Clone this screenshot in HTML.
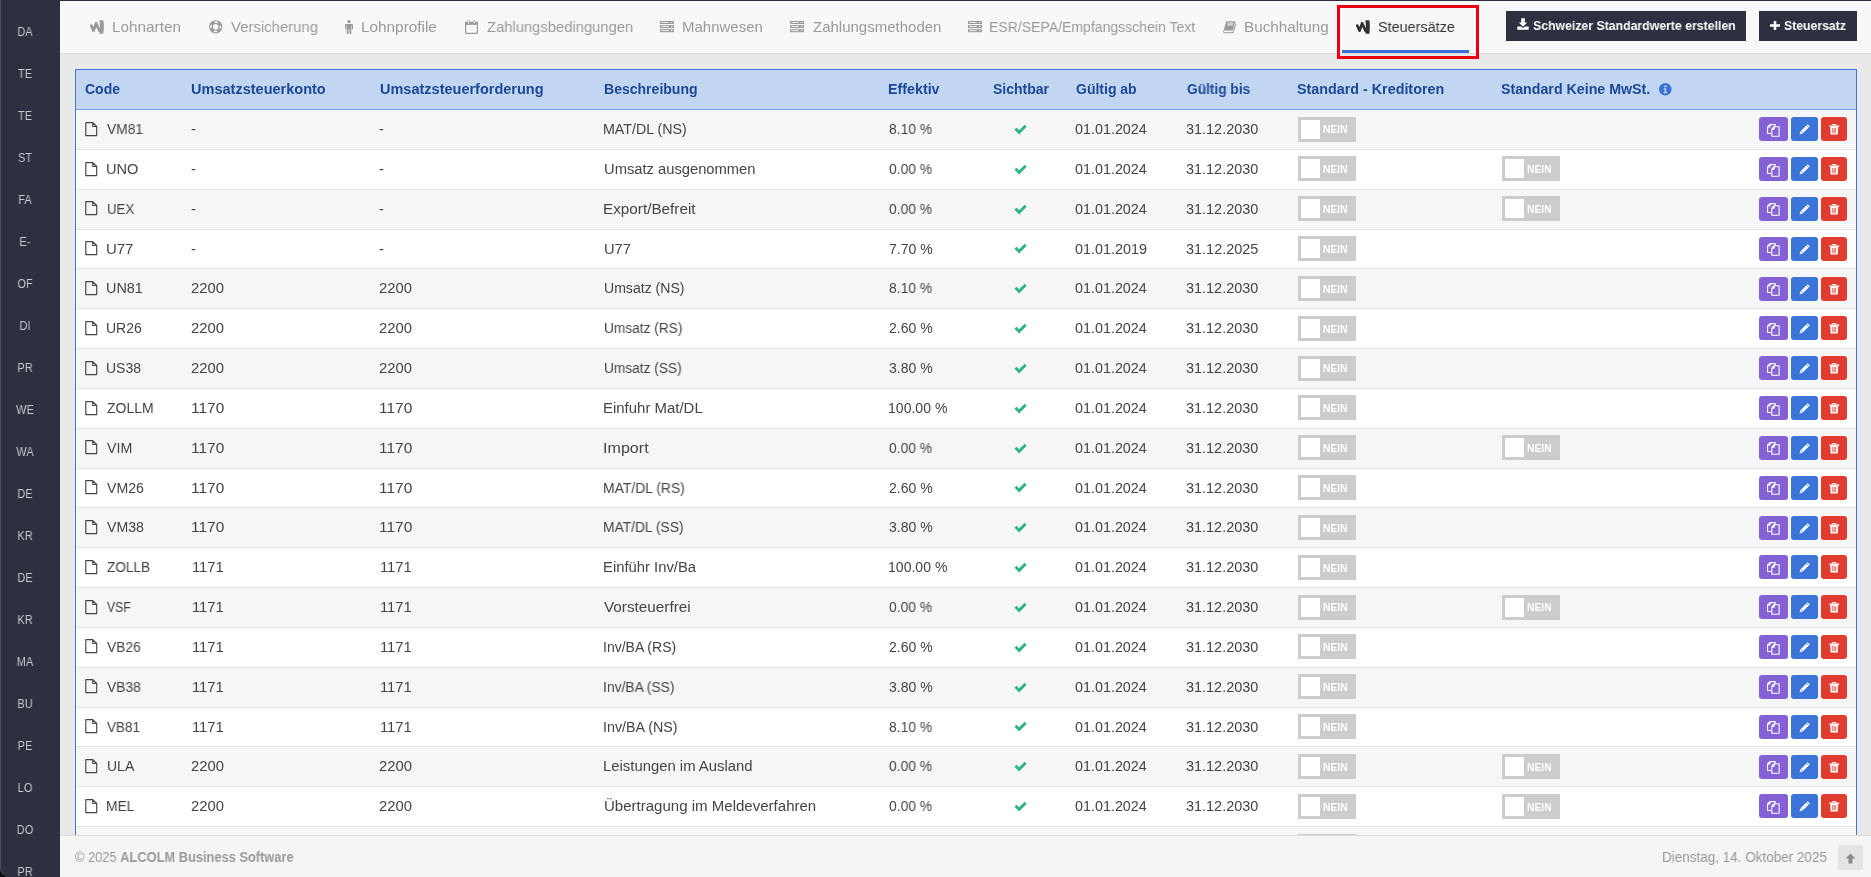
<!DOCTYPE html><html><head><meta charset="utf-8"><style>
html,body{margin:0;padding:0;width:1871px;height:877px;overflow:hidden;background:#e9e9e9;font-family:"Liberation Sans", sans-serif;}
.t{position:absolute;white-space:nowrap;line-height:1;transform-origin:0 0;will-change:transform;}
.a{position:absolute;}
svg{position:absolute;overflow:visible;}
</style></head><body>
<div class="a" style="left:60px;top:0;width:1811px;height:53px;background:#f8f8f8;"></div>
<div class="a" style="left:60px;top:53px;width:1811px;height:1px;background:#dcdcdc;"></div>
<div class="a" style="left:0;top:0;width:1871px;height:1px;background:#2c3040;"></div>
<div class="a" style="left:75px;top:69px;width:1782px;height:800px;background:#fff;box-sizing:border-box;border:1px solid #3b76d8;"></div>
<div class="a" style="left:76px;top:70px;width:1780px;height:39px;background:#c2d6f1;"></div>
<div class="a" style="left:76px;top:109px;width:1780px;height:1px;background:#6f9de3;"></div>
<div class="t" style="left:84.57px;top:82.05px;font-size:14px;color:#1b4896;font-weight:bold;transform:scaleX(0.9948);">Code</div>
<div class="t" style="left:191.17px;top:82.05px;font-size:14px;color:#1b4896;font-weight:bold;transform:scaleX(1.0371);">Umsatzsteuerkonto</div>
<div class="t" style="left:379.87px;top:82.05px;font-size:14px;color:#1b4896;font-weight:bold;transform:scaleX(1.0358);">Umsatzsteuerforderung</div>
<div class="t" style="left:603.55px;top:82.05px;font-size:14px;color:#1b4896;font-weight:bold;transform:scaleX(1.0023);">Beschreibung</div>
<div class="t" style="left:888.43px;top:82.05px;font-size:14px;color:#1b4896;font-weight:bold;transform:scaleX(1.0194);">Effektiv</div>
<div class="t" style="left:992.54px;top:82.05px;font-size:14px;color:#1b4896;font-weight:bold;">Sichtbar</div>
<div class="t" style="left:1075.97px;top:82.05px;font-size:14px;color:#1b4896;font-weight:bold;transform:scaleX(0.9965);">G&uuml;ltig ab</div>
<div class="t" style="left:1186.68px;top:82.05px;font-size:14px;color:#1b4896;font-weight:bold;transform:scaleX(0.9778);">G&uuml;ltig bis</div>
<div class="t" style="left:1297.23px;top:82.05px;font-size:14px;color:#1b4896;font-weight:bold;transform:scaleX(1.0226);">Standard - Kreditoren</div>
<div class="t" style="left:1501.23px;top:82.05px;font-size:14px;color:#1b4896;font-weight:bold;transform:scaleX(1.0149);">Standard Keine MwSt.</div>
<svg style="left:1658.5px;top:82.8px" width="12.5" height="12.5" viewBox="0 0 12 12"><circle cx="6" cy="6" r="6" fill="#3b73d6"/><circle cx="6.1" cy="3.2" r="1.1" fill="#c2d6f1"/><path d="M4.6 5.1h2.3v3.6h0.9v1.1H4.5V8.7h0.9V6.2h-0.8z" fill="#c2d6f1"/></svg>
<div class="a" style="left:76px;top:110.00px;width:1780px;height:39.00px;background:#f6f6f6;"></div>
<div class="a" style="left:76px;top:149.00px;width:1780px;height:1px;background:#e3e3e3;"></div>
<svg style="left:85px;top:121.70px" width="12" height="14" viewBox="0 0 12 14"><path d="M0.8 0.6h7l3.9 3.9v9.1h-10.9z M7.8 0.6v3.9h3.9" fill="none" stroke="#444" stroke-width="1.15" stroke-linejoin="round"/></svg>
<div class="t" style="left:107.08px;top:122.05px;font-size:14px;color:#444;font-weight:normal;transform:scaleX(0.9862);">VM81</div>
<div class="t" style="left:191.31px;top:122.05px;font-size:14px;color:#444;font-weight:normal;transform:scaleX(1.0483);">-</div>
<div class="t" style="left:379.31px;top:122.05px;font-size:14px;color:#444;font-weight:normal;transform:scaleX(1.0483);">-</div>
<div class="t" style="left:603.23px;top:122.05px;font-size:14px;color:#444;font-weight:normal;transform:scaleX(1.0170);">MAT/DL (NS)</div>
<div class="t" style="left:888.65px;top:122.05px;font-size:14px;color:#444;font-weight:normal;transform:scaleX(0.9875);">8.10 %</div>
<svg style="left:1014px;top:124.00px" width="13" height="10" viewBox="0 0 13 10"><path d="M1.5 4.8l3.6 3.6l6.6-6.6" fill="none" stroke="#30b38a" stroke-width="2.9"/></svg>
<div class="t" style="left:1075.29px;top:122.05px;font-size:14px;color:#444;font-weight:normal;transform:scaleX(1.0247);">01.01.2024</div>
<div class="t" style="left:1186.06px;top:122.05px;font-size:14px;color:#444;font-weight:normal;transform:scaleX(1.0318);">31.12.2030</div>
<div class="a" style="left:1298px;top:116.60px;width:58px;height:25px;background:#cccccc;"><div class="a" style="left:3px;top:3px;width:19px;height:19px;background:#fff;"></div><div class="t" style="left:24.6px;top:8.9px;font-size:10px;font-weight:bold;color:#fff;transform:scaleX(1.03)">NEIN</div></div>
<div class="a" style="left:1759px;top:117.30px;width:29px;height:24px;background:#8461d5;border-radius:3px;"></div>
<svg style="left:1767px;top:123.80px" width="13" height="13" viewBox="0 0 13 13"><path d="M8.2 2.7V0.6H3L0.6 3V9.5H4.8 M3 0.6V3H0.6 M7.2 2.7H12.1V12.3H4.8V5.1z M7.2 2.7V5.1H4.8" fill="none" stroke="#fff" stroke-width="1.1" stroke-linejoin="round"/></svg>
<div class="a" style="left:1791px;top:117.30px;width:27px;height:24px;background:#3c74d8;border-radius:3px;"></div>
<svg style="left:1798px;top:123.30px" width="13" height="13" viewBox="0 0 13 13"><path d="M9.6 1.2l2.2 2.2l-7.2 7.2l-3.1 0.9l0.9-3.1z" fill="#fff"/><path d="M2.9 8.3l1.8 1.8 M8.4 2.4l2.2 2.2" stroke="#3c74d8" stroke-width="0.7" fill="none"/></svg>
<div class="a" style="left:1821px;top:117.30px;width:26px;height:24px;background:#e03c2f;border-radius:3px;"></div>
<svg style="left:1829px;top:124.30px" width="11" height="11" viewBox="0 0 11 11"><path d="M0.3 2.1h10" stroke="#fff" stroke-width="1.3"/><path d="M3.4 1.6v-1h3.6v1" fill="none" stroke="#fff" stroke-width="1"/><path d="M1.2 2.6h8l-0.4 8h-7.2z" fill="#fff"/><path d="M3.7 4v5.2 M5.2 4v5.2 M6.7 4v5.2" stroke="#e03c2f" stroke-width="0.75"/></svg>
<div class="a" style="left:76px;top:150.00px;width:1780px;height:38.83px;background:#ffffff;"></div>
<div class="a" style="left:76px;top:188.83px;width:1780px;height:1px;background:#e3e3e3;"></div>
<svg style="left:85px;top:161.53px" width="12" height="14" viewBox="0 0 12 14"><path d="M0.8 0.6h7l3.9 3.9v9.1h-10.9z M7.8 0.6v3.9h3.9" fill="none" stroke="#444" stroke-width="1.15" stroke-linejoin="round"/></svg>
<div class="t" style="left:106.45px;top:161.88px;font-size:14px;color:#444;font-weight:normal;transform:scaleX(1.0410);">UNO</div>
<div class="t" style="left:191.31px;top:161.88px;font-size:14px;color:#444;font-weight:normal;transform:scaleX(1.0483);">-</div>
<div class="t" style="left:379.31px;top:161.88px;font-size:14px;color:#444;font-weight:normal;transform:scaleX(1.0483);">-</div>
<div class="t" style="left:603.54px;top:161.88px;font-size:14px;color:#444;font-weight:normal;transform:scaleX(1.0524);">Umsatz ausgenommen</div>
<div class="t" style="left:888.71px;top:161.88px;font-size:14px;color:#444;font-weight:normal;transform:scaleX(0.9861);">0.00 %</div>
<svg style="left:1014px;top:163.83px" width="13" height="10" viewBox="0 0 13 10"><path d="M1.5 4.8l3.6 3.6l6.6-6.6" fill="none" stroke="#30b38a" stroke-width="2.9"/></svg>
<div class="t" style="left:1075.29px;top:161.88px;font-size:14px;color:#444;font-weight:normal;transform:scaleX(1.0247);">01.01.2024</div>
<div class="t" style="left:1186.06px;top:161.88px;font-size:14px;color:#444;font-weight:normal;transform:scaleX(1.0318);">31.12.2030</div>
<div class="a" style="left:1298px;top:156.43px;width:58px;height:25px;background:#cccccc;"><div class="a" style="left:3px;top:3px;width:19px;height:19px;background:#fff;"></div><div class="t" style="left:24.6px;top:8.9px;font-size:10px;font-weight:bold;color:#fff;transform:scaleX(1.03)">NEIN</div></div>
<div class="a" style="left:1502px;top:156.43px;width:58px;height:25px;background:#cccccc;"><div class="a" style="left:3px;top:3px;width:19px;height:19px;background:#fff;"></div><div class="t" style="left:24.6px;top:8.9px;font-size:10px;font-weight:bold;color:#fff;transform:scaleX(1.03)">NEIN</div></div>
<div class="a" style="left:1759px;top:157.13px;width:29px;height:24px;background:#8461d5;border-radius:3px;"></div>
<svg style="left:1767px;top:163.63px" width="13" height="13" viewBox="0 0 13 13"><path d="M8.2 2.7V0.6H3L0.6 3V9.5H4.8 M3 0.6V3H0.6 M7.2 2.7H12.1V12.3H4.8V5.1z M7.2 2.7V5.1H4.8" fill="none" stroke="#fff" stroke-width="1.1" stroke-linejoin="round"/></svg>
<div class="a" style="left:1791px;top:157.13px;width:27px;height:24px;background:#3c74d8;border-radius:3px;"></div>
<svg style="left:1798px;top:163.13px" width="13" height="13" viewBox="0 0 13 13"><path d="M9.6 1.2l2.2 2.2l-7.2 7.2l-3.1 0.9l0.9-3.1z" fill="#fff"/><path d="M2.9 8.3l1.8 1.8 M8.4 2.4l2.2 2.2" stroke="#3c74d8" stroke-width="0.7" fill="none"/></svg>
<div class="a" style="left:1821px;top:157.13px;width:26px;height:24px;background:#e03c2f;border-radius:3px;"></div>
<svg style="left:1829px;top:164.13px" width="11" height="11" viewBox="0 0 11 11"><path d="M0.3 2.1h10" stroke="#fff" stroke-width="1.3"/><path d="M3.4 1.6v-1h3.6v1" fill="none" stroke="#fff" stroke-width="1"/><path d="M1.2 2.6h8l-0.4 8h-7.2z" fill="#fff"/><path d="M3.7 4v5.2 M5.2 4v5.2 M6.7 4v5.2" stroke="#e03c2f" stroke-width="0.75"/></svg>
<div class="a" style="left:76px;top:189.83px;width:1780px;height:38.83px;background:#f6f6f6;"></div>
<div class="a" style="left:76px;top:228.66px;width:1780px;height:1px;background:#e3e3e3;"></div>
<svg style="left:85px;top:201.36px" width="12" height="14" viewBox="0 0 12 14"><path d="M0.8 0.6h7l3.9 3.9v9.1h-10.9z M7.8 0.6v3.9h3.9" fill="none" stroke="#444" stroke-width="1.15" stroke-linejoin="round"/></svg>
<div class="t" style="left:106.54px;top:201.71px;font-size:14px;color:#444;font-weight:normal;transform:scaleX(0.9448);">UEX</div>
<div class="t" style="left:191.31px;top:201.71px;font-size:14px;color:#444;font-weight:normal;transform:scaleX(1.0483);">-</div>
<div class="t" style="left:379.31px;top:201.71px;font-size:14px;color:#444;font-weight:normal;transform:scaleX(1.0483);">-</div>
<div class="t" style="left:603.14px;top:201.71px;font-size:14px;color:#444;font-weight:normal;transform:scaleX(1.0909);">Export/Befreit</div>
<div class="t" style="left:888.71px;top:201.71px;font-size:14px;color:#444;font-weight:normal;transform:scaleX(0.9861);">0.00 %</div>
<svg style="left:1014px;top:203.66px" width="13" height="10" viewBox="0 0 13 10"><path d="M1.5 4.8l3.6 3.6l6.6-6.6" fill="none" stroke="#30b38a" stroke-width="2.9"/></svg>
<div class="t" style="left:1075.29px;top:201.71px;font-size:14px;color:#444;font-weight:normal;transform:scaleX(1.0247);">01.01.2024</div>
<div class="t" style="left:1186.06px;top:201.71px;font-size:14px;color:#444;font-weight:normal;transform:scaleX(1.0318);">31.12.2030</div>
<div class="a" style="left:1298px;top:196.26px;width:58px;height:25px;background:#cccccc;"><div class="a" style="left:3px;top:3px;width:19px;height:19px;background:#fff;"></div><div class="t" style="left:24.6px;top:8.9px;font-size:10px;font-weight:bold;color:#fff;transform:scaleX(1.03)">NEIN</div></div>
<div class="a" style="left:1502px;top:196.26px;width:58px;height:25px;background:#cccccc;"><div class="a" style="left:3px;top:3px;width:19px;height:19px;background:#fff;"></div><div class="t" style="left:24.6px;top:8.9px;font-size:10px;font-weight:bold;color:#fff;transform:scaleX(1.03)">NEIN</div></div>
<div class="a" style="left:1759px;top:196.96px;width:29px;height:24px;background:#8461d5;border-radius:3px;"></div>
<svg style="left:1767px;top:203.46px" width="13" height="13" viewBox="0 0 13 13"><path d="M8.2 2.7V0.6H3L0.6 3V9.5H4.8 M3 0.6V3H0.6 M7.2 2.7H12.1V12.3H4.8V5.1z M7.2 2.7V5.1H4.8" fill="none" stroke="#fff" stroke-width="1.1" stroke-linejoin="round"/></svg>
<div class="a" style="left:1791px;top:196.96px;width:27px;height:24px;background:#3c74d8;border-radius:3px;"></div>
<svg style="left:1798px;top:202.96px" width="13" height="13" viewBox="0 0 13 13"><path d="M9.6 1.2l2.2 2.2l-7.2 7.2l-3.1 0.9l0.9-3.1z" fill="#fff"/><path d="M2.9 8.3l1.8 1.8 M8.4 2.4l2.2 2.2" stroke="#3c74d8" stroke-width="0.7" fill="none"/></svg>
<div class="a" style="left:1821px;top:196.96px;width:26px;height:24px;background:#e03c2f;border-radius:3px;"></div>
<svg style="left:1829px;top:203.96px" width="11" height="11" viewBox="0 0 11 11"><path d="M0.3 2.1h10" stroke="#fff" stroke-width="1.3"/><path d="M3.4 1.6v-1h3.6v1" fill="none" stroke="#fff" stroke-width="1"/><path d="M1.2 2.6h8l-0.4 8h-7.2z" fill="#fff"/><path d="M3.7 4v5.2 M5.2 4v5.2 M6.7 4v5.2" stroke="#e03c2f" stroke-width="0.75"/></svg>
<div class="a" style="left:76px;top:229.66px;width:1780px;height:38.83px;background:#ffffff;"></div>
<div class="a" style="left:76px;top:268.49px;width:1780px;height:1px;background:#e3e3e3;"></div>
<svg style="left:85px;top:241.19px" width="12" height="14" viewBox="0 0 12 14"><path d="M0.8 0.6h7l3.9 3.9v9.1h-10.9z M7.8 0.6v3.9h3.9" fill="none" stroke="#444" stroke-width="1.15" stroke-linejoin="round"/></svg>
<div class="t" style="left:106.43px;top:241.54px;font-size:14px;color:#444;font-weight:normal;transform:scaleX(1.0658);">U77</div>
<div class="t" style="left:191.31px;top:241.54px;font-size:14px;color:#444;font-weight:normal;transform:scaleX(1.0483);">-</div>
<div class="t" style="left:379.31px;top:241.54px;font-size:14px;color:#444;font-weight:normal;transform:scaleX(1.0483);">-</div>
<div class="t" style="left:603.54px;top:241.54px;font-size:14px;color:#444;font-weight:normal;transform:scaleX(1.0493);">U77</div>
<div class="t" style="left:888.59px;top:241.54px;font-size:14px;color:#444;font-weight:normal;transform:scaleX(0.9888);">7.70 %</div>
<svg style="left:1014px;top:243.49px" width="13" height="10" viewBox="0 0 13 10"><path d="M1.5 4.8l3.6 3.6l6.6-6.6" fill="none" stroke="#30b38a" stroke-width="2.9"/></svg>
<div class="t" style="left:1075.28px;top:241.54px;font-size:14px;color:#444;font-weight:normal;transform:scaleX(1.0284);">01.01.2019</div>
<div class="t" style="left:1186.05px;top:241.54px;font-size:14px;color:#444;font-weight:normal;transform:scaleX(1.0323);">31.12.2025</div>
<div class="a" style="left:1298px;top:236.09px;width:58px;height:25px;background:#cccccc;"><div class="a" style="left:3px;top:3px;width:19px;height:19px;background:#fff;"></div><div class="t" style="left:24.6px;top:8.9px;font-size:10px;font-weight:bold;color:#fff;transform:scaleX(1.03)">NEIN</div></div>
<div class="a" style="left:1759px;top:236.79px;width:29px;height:24px;background:#8461d5;border-radius:3px;"></div>
<svg style="left:1767px;top:243.29px" width="13" height="13" viewBox="0 0 13 13"><path d="M8.2 2.7V0.6H3L0.6 3V9.5H4.8 M3 0.6V3H0.6 M7.2 2.7H12.1V12.3H4.8V5.1z M7.2 2.7V5.1H4.8" fill="none" stroke="#fff" stroke-width="1.1" stroke-linejoin="round"/></svg>
<div class="a" style="left:1791px;top:236.79px;width:27px;height:24px;background:#3c74d8;border-radius:3px;"></div>
<svg style="left:1798px;top:242.79px" width="13" height="13" viewBox="0 0 13 13"><path d="M9.6 1.2l2.2 2.2l-7.2 7.2l-3.1 0.9l0.9-3.1z" fill="#fff"/><path d="M2.9 8.3l1.8 1.8 M8.4 2.4l2.2 2.2" stroke="#3c74d8" stroke-width="0.7" fill="none"/></svg>
<div class="a" style="left:1821px;top:236.79px;width:26px;height:24px;background:#e03c2f;border-radius:3px;"></div>
<svg style="left:1829px;top:243.79px" width="11" height="11" viewBox="0 0 11 11"><path d="M0.3 2.1h10" stroke="#fff" stroke-width="1.3"/><path d="M3.4 1.6v-1h3.6v1" fill="none" stroke="#fff" stroke-width="1"/><path d="M1.2 2.6h8l-0.4 8h-7.2z" fill="#fff"/><path d="M3.7 4v5.2 M5.2 4v5.2 M6.7 4v5.2" stroke="#e03c2f" stroke-width="0.75"/></svg>
<div class="a" style="left:76px;top:269.49px;width:1780px;height:38.83px;background:#f6f6f6;"></div>
<div class="a" style="left:76px;top:308.32px;width:1780px;height:1px;background:#e3e3e3;"></div>
<svg style="left:85px;top:281.02px" width="12" height="14" viewBox="0 0 12 14"><path d="M0.8 0.6h7l3.9 3.9v9.1h-10.9z M7.8 0.6v3.9h3.9" fill="none" stroke="#444" stroke-width="1.15" stroke-linejoin="round"/></svg>
<div class="t" style="left:106.46px;top:281.37px;font-size:14px;color:#444;font-weight:normal;transform:scaleX(1.0282);">UN81</div>
<div class="t" style="left:191.24px;top:281.37px;font-size:14px;color:#444;font-weight:normal;transform:scaleX(1.0597);">2200</div>
<div class="t" style="left:379.24px;top:281.37px;font-size:14px;color:#444;font-weight:normal;transform:scaleX(1.0597);">2200</div>
<div class="t" style="left:603.58px;top:281.37px;font-size:14px;color:#444;font-weight:normal;transform:scaleX(1.0045);">Umsatz (NS)</div>
<div class="t" style="left:888.65px;top:281.37px;font-size:14px;color:#444;font-weight:normal;transform:scaleX(0.9875);">8.10 %</div>
<svg style="left:1014px;top:283.32px" width="13" height="10" viewBox="0 0 13 10"><path d="M1.5 4.8l3.6 3.6l6.6-6.6" fill="none" stroke="#30b38a" stroke-width="2.9"/></svg>
<div class="t" style="left:1075.29px;top:281.37px;font-size:14px;color:#444;font-weight:normal;transform:scaleX(1.0247);">01.01.2024</div>
<div class="t" style="left:1186.06px;top:281.37px;font-size:14px;color:#444;font-weight:normal;transform:scaleX(1.0318);">31.12.2030</div>
<div class="a" style="left:1298px;top:275.92px;width:58px;height:25px;background:#cccccc;"><div class="a" style="left:3px;top:3px;width:19px;height:19px;background:#fff;"></div><div class="t" style="left:24.6px;top:8.9px;font-size:10px;font-weight:bold;color:#fff;transform:scaleX(1.03)">NEIN</div></div>
<div class="a" style="left:1759px;top:276.62px;width:29px;height:24px;background:#8461d5;border-radius:3px;"></div>
<svg style="left:1767px;top:283.12px" width="13" height="13" viewBox="0 0 13 13"><path d="M8.2 2.7V0.6H3L0.6 3V9.5H4.8 M3 0.6V3H0.6 M7.2 2.7H12.1V12.3H4.8V5.1z M7.2 2.7V5.1H4.8" fill="none" stroke="#fff" stroke-width="1.1" stroke-linejoin="round"/></svg>
<div class="a" style="left:1791px;top:276.62px;width:27px;height:24px;background:#3c74d8;border-radius:3px;"></div>
<svg style="left:1798px;top:282.62px" width="13" height="13" viewBox="0 0 13 13"><path d="M9.6 1.2l2.2 2.2l-7.2 7.2l-3.1 0.9l0.9-3.1z" fill="#fff"/><path d="M2.9 8.3l1.8 1.8 M8.4 2.4l2.2 2.2" stroke="#3c74d8" stroke-width="0.7" fill="none"/></svg>
<div class="a" style="left:1821px;top:276.62px;width:26px;height:24px;background:#e03c2f;border-radius:3px;"></div>
<svg style="left:1829px;top:283.62px" width="11" height="11" viewBox="0 0 11 11"><path d="M0.3 2.1h10" stroke="#fff" stroke-width="1.3"/><path d="M3.4 1.6v-1h3.6v1" fill="none" stroke="#fff" stroke-width="1"/><path d="M1.2 2.6h8l-0.4 8h-7.2z" fill="#fff"/><path d="M3.7 4v5.2 M5.2 4v5.2 M6.7 4v5.2" stroke="#e03c2f" stroke-width="0.75"/></svg>
<div class="a" style="left:76px;top:309.32px;width:1780px;height:38.83px;background:#ffffff;"></div>
<div class="a" style="left:76px;top:348.15px;width:1780px;height:1px;background:#e3e3e3;"></div>
<svg style="left:85px;top:320.85px" width="12" height="14" viewBox="0 0 12 14"><path d="M0.8 0.6h7l3.9 3.9v9.1h-10.9z M7.8 0.6v3.9h3.9" fill="none" stroke="#444" stroke-width="1.15" stroke-linejoin="round"/></svg>
<div class="t" style="left:106.49px;top:321.20px;font-size:14px;color:#444;font-weight:normal;transform:scaleX(0.9930);">UR26</div>
<div class="t" style="left:191.24px;top:321.20px;font-size:14px;color:#444;font-weight:normal;transform:scaleX(1.0597);">2200</div>
<div class="t" style="left:379.24px;top:321.20px;font-size:14px;color:#444;font-weight:normal;transform:scaleX(1.0597);">2200</div>
<div class="t" style="left:603.61px;top:321.20px;font-size:14px;color:#444;font-weight:normal;transform:scaleX(0.9790);">Umsatz (RS)</div>
<div class="t" style="left:888.59px;top:321.20px;font-size:14px;color:#444;font-weight:normal;transform:scaleX(0.9887);">2.60 %</div>
<svg style="left:1014px;top:323.15px" width="13" height="10" viewBox="0 0 13 10"><path d="M1.5 4.8l3.6 3.6l6.6-6.6" fill="none" stroke="#30b38a" stroke-width="2.9"/></svg>
<div class="t" style="left:1075.29px;top:321.20px;font-size:14px;color:#444;font-weight:normal;transform:scaleX(1.0247);">01.01.2024</div>
<div class="t" style="left:1186.06px;top:321.20px;font-size:14px;color:#444;font-weight:normal;transform:scaleX(1.0318);">31.12.2030</div>
<div class="a" style="left:1298px;top:315.75px;width:58px;height:25px;background:#cccccc;"><div class="a" style="left:3px;top:3px;width:19px;height:19px;background:#fff;"></div><div class="t" style="left:24.6px;top:8.9px;font-size:10px;font-weight:bold;color:#fff;transform:scaleX(1.03)">NEIN</div></div>
<div class="a" style="left:1759px;top:316.45px;width:29px;height:24px;background:#8461d5;border-radius:3px;"></div>
<svg style="left:1767px;top:322.95px" width="13" height="13" viewBox="0 0 13 13"><path d="M8.2 2.7V0.6H3L0.6 3V9.5H4.8 M3 0.6V3H0.6 M7.2 2.7H12.1V12.3H4.8V5.1z M7.2 2.7V5.1H4.8" fill="none" stroke="#fff" stroke-width="1.1" stroke-linejoin="round"/></svg>
<div class="a" style="left:1791px;top:316.45px;width:27px;height:24px;background:#3c74d8;border-radius:3px;"></div>
<svg style="left:1798px;top:322.45px" width="13" height="13" viewBox="0 0 13 13"><path d="M9.6 1.2l2.2 2.2l-7.2 7.2l-3.1 0.9l0.9-3.1z" fill="#fff"/><path d="M2.9 8.3l1.8 1.8 M8.4 2.4l2.2 2.2" stroke="#3c74d8" stroke-width="0.7" fill="none"/></svg>
<div class="a" style="left:1821px;top:316.45px;width:26px;height:24px;background:#e03c2f;border-radius:3px;"></div>
<svg style="left:1829px;top:323.45px" width="11" height="11" viewBox="0 0 11 11"><path d="M0.3 2.1h10" stroke="#fff" stroke-width="1.3"/><path d="M3.4 1.6v-1h3.6v1" fill="none" stroke="#fff" stroke-width="1"/><path d="M1.2 2.6h8l-0.4 8h-7.2z" fill="#fff"/><path d="M3.7 4v5.2 M5.2 4v5.2 M6.7 4v5.2" stroke="#e03c2f" stroke-width="0.75"/></svg>
<div class="a" style="left:76px;top:349.15px;width:1780px;height:38.83px;background:#f6f6f6;"></div>
<div class="a" style="left:76px;top:387.98px;width:1780px;height:1px;background:#e3e3e3;"></div>
<svg style="left:85px;top:360.68px" width="12" height="14" viewBox="0 0 12 14"><path d="M0.8 0.6h7l3.9 3.9v9.1h-10.9z M7.8 0.6v3.9h3.9" fill="none" stroke="#444" stroke-width="1.15" stroke-linejoin="round"/></svg>
<div class="t" style="left:106.49px;top:361.03px;font-size:14px;color:#444;font-weight:normal;transform:scaleX(0.9902);">US38</div>
<div class="t" style="left:191.24px;top:361.03px;font-size:14px;color:#444;font-weight:normal;transform:scaleX(1.0597);">2200</div>
<div class="t" style="left:379.24px;top:361.03px;font-size:14px;color:#444;font-weight:normal;transform:scaleX(1.0597);">2200</div>
<div class="t" style="left:603.61px;top:361.03px;font-size:14px;color:#444;font-weight:normal;transform:scaleX(0.9785);">Umsatz (SS)</div>
<div class="t" style="left:888.59px;top:361.03px;font-size:14px;color:#444;font-weight:normal;transform:scaleX(0.9889);">3.80 %</div>
<svg style="left:1014px;top:362.98px" width="13" height="10" viewBox="0 0 13 10"><path d="M1.5 4.8l3.6 3.6l6.6-6.6" fill="none" stroke="#30b38a" stroke-width="2.9"/></svg>
<div class="t" style="left:1075.29px;top:361.03px;font-size:14px;color:#444;font-weight:normal;transform:scaleX(1.0247);">01.01.2024</div>
<div class="t" style="left:1186.06px;top:361.03px;font-size:14px;color:#444;font-weight:normal;transform:scaleX(1.0318);">31.12.2030</div>
<div class="a" style="left:1298px;top:355.58px;width:58px;height:25px;background:#cccccc;"><div class="a" style="left:3px;top:3px;width:19px;height:19px;background:#fff;"></div><div class="t" style="left:24.6px;top:8.9px;font-size:10px;font-weight:bold;color:#fff;transform:scaleX(1.03)">NEIN</div></div>
<div class="a" style="left:1759px;top:356.28px;width:29px;height:24px;background:#8461d5;border-radius:3px;"></div>
<svg style="left:1767px;top:362.78px" width="13" height="13" viewBox="0 0 13 13"><path d="M8.2 2.7V0.6H3L0.6 3V9.5H4.8 M3 0.6V3H0.6 M7.2 2.7H12.1V12.3H4.8V5.1z M7.2 2.7V5.1H4.8" fill="none" stroke="#fff" stroke-width="1.1" stroke-linejoin="round"/></svg>
<div class="a" style="left:1791px;top:356.28px;width:27px;height:24px;background:#3c74d8;border-radius:3px;"></div>
<svg style="left:1798px;top:362.28px" width="13" height="13" viewBox="0 0 13 13"><path d="M9.6 1.2l2.2 2.2l-7.2 7.2l-3.1 0.9l0.9-3.1z" fill="#fff"/><path d="M2.9 8.3l1.8 1.8 M8.4 2.4l2.2 2.2" stroke="#3c74d8" stroke-width="0.7" fill="none"/></svg>
<div class="a" style="left:1821px;top:356.28px;width:26px;height:24px;background:#e03c2f;border-radius:3px;"></div>
<svg style="left:1829px;top:363.28px" width="11" height="11" viewBox="0 0 11 11"><path d="M0.3 2.1h10" stroke="#fff" stroke-width="1.3"/><path d="M3.4 1.6v-1h3.6v1" fill="none" stroke="#fff" stroke-width="1"/><path d="M1.2 2.6h8l-0.4 8h-7.2z" fill="#fff"/><path d="M3.7 4v5.2 M5.2 4v5.2 M6.7 4v5.2" stroke="#e03c2f" stroke-width="0.75"/></svg>
<div class="a" style="left:76px;top:388.98px;width:1780px;height:38.83px;background:#ffffff;"></div>
<div class="a" style="left:76px;top:427.81px;width:1780px;height:1px;background:#e3e3e3;"></div>
<svg style="left:85px;top:400.51px" width="12" height="14" viewBox="0 0 12 14"><path d="M0.8 0.6h7l3.9 3.9v9.1h-10.9z M7.8 0.6v3.9h3.9" fill="none" stroke="#444" stroke-width="1.15" stroke-linejoin="round"/></svg>
<div class="t" style="left:106.93px;top:400.86px;font-size:14px;color:#444;font-weight:normal;">ZOLLM</div>
<div class="t" style="left:190.99px;top:400.86px;font-size:14px;color:#444;font-weight:normal;transform:scaleX(1.1041);">1170</div>
<div class="t" style="left:378.99px;top:400.86px;font-size:14px;color:#444;font-weight:normal;transform:scaleX(1.1041);">1170</div>
<div class="t" style="left:603.17px;top:400.86px;font-size:14px;color:#444;font-weight:normal;transform:scaleX(1.0680);">Einfuhr Mat/DL</div>
<div class="t" style="left:888.38px;top:400.86px;font-size:14px;color:#444;font-weight:normal;transform:scaleX(1.0043);">100.00 %</div>
<svg style="left:1014px;top:402.81px" width="13" height="10" viewBox="0 0 13 10"><path d="M1.5 4.8l3.6 3.6l6.6-6.6" fill="none" stroke="#30b38a" stroke-width="2.9"/></svg>
<div class="t" style="left:1075.29px;top:400.86px;font-size:14px;color:#444;font-weight:normal;transform:scaleX(1.0247);">01.01.2024</div>
<div class="t" style="left:1186.06px;top:400.86px;font-size:14px;color:#444;font-weight:normal;transform:scaleX(1.0318);">31.12.2030</div>
<div class="a" style="left:1298px;top:395.41px;width:58px;height:25px;background:#cccccc;"><div class="a" style="left:3px;top:3px;width:19px;height:19px;background:#fff;"></div><div class="t" style="left:24.6px;top:8.9px;font-size:10px;font-weight:bold;color:#fff;transform:scaleX(1.03)">NEIN</div></div>
<div class="a" style="left:1759px;top:396.11px;width:29px;height:24px;background:#8461d5;border-radius:3px;"></div>
<svg style="left:1767px;top:402.61px" width="13" height="13" viewBox="0 0 13 13"><path d="M8.2 2.7V0.6H3L0.6 3V9.5H4.8 M3 0.6V3H0.6 M7.2 2.7H12.1V12.3H4.8V5.1z M7.2 2.7V5.1H4.8" fill="none" stroke="#fff" stroke-width="1.1" stroke-linejoin="round"/></svg>
<div class="a" style="left:1791px;top:396.11px;width:27px;height:24px;background:#3c74d8;border-radius:3px;"></div>
<svg style="left:1798px;top:402.11px" width="13" height="13" viewBox="0 0 13 13"><path d="M9.6 1.2l2.2 2.2l-7.2 7.2l-3.1 0.9l0.9-3.1z" fill="#fff"/><path d="M2.9 8.3l1.8 1.8 M8.4 2.4l2.2 2.2" stroke="#3c74d8" stroke-width="0.7" fill="none"/></svg>
<div class="a" style="left:1821px;top:396.11px;width:26px;height:24px;background:#e03c2f;border-radius:3px;"></div>
<svg style="left:1829px;top:403.11px" width="11" height="11" viewBox="0 0 11 11"><path d="M0.3 2.1h10" stroke="#fff" stroke-width="1.3"/><path d="M3.4 1.6v-1h3.6v1" fill="none" stroke="#fff" stroke-width="1"/><path d="M1.2 2.6h8l-0.4 8h-7.2z" fill="#fff"/><path d="M3.7 4v5.2 M5.2 4v5.2 M6.7 4v5.2" stroke="#e03c2f" stroke-width="0.75"/></svg>
<div class="a" style="left:76px;top:428.81px;width:1780px;height:38.83px;background:#f6f6f6;"></div>
<div class="a" style="left:76px;top:467.64px;width:1780px;height:1px;background:#e3e3e3;"></div>
<svg style="left:85px;top:440.34px" width="12" height="14" viewBox="0 0 12 14"><path d="M0.8 0.6h7l3.9 3.9v9.1h-10.9z M7.8 0.6v3.9h3.9" fill="none" stroke="#444" stroke-width="1.15" stroke-linejoin="round"/></svg>
<div class="t" style="left:107.07px;top:440.69px;font-size:14px;color:#444;font-weight:normal;transform:scaleX(1.0137);">VIM</div>
<div class="t" style="left:190.99px;top:440.69px;font-size:14px;color:#444;font-weight:normal;transform:scaleX(1.1041);">1170</div>
<div class="t" style="left:378.99px;top:440.69px;font-size:14px;color:#444;font-weight:normal;transform:scaleX(1.1041);">1170</div>
<div class="t" style="left:602.93px;top:440.69px;font-size:14px;color:#444;font-weight:normal;transform:scaleX(1.1500);">Import</div>
<div class="t" style="left:888.71px;top:440.69px;font-size:14px;color:#444;font-weight:normal;transform:scaleX(0.9861);">0.00 %</div>
<svg style="left:1014px;top:442.64px" width="13" height="10" viewBox="0 0 13 10"><path d="M1.5 4.8l3.6 3.6l6.6-6.6" fill="none" stroke="#30b38a" stroke-width="2.9"/></svg>
<div class="t" style="left:1075.29px;top:440.69px;font-size:14px;color:#444;font-weight:normal;transform:scaleX(1.0247);">01.01.2024</div>
<div class="t" style="left:1186.06px;top:440.69px;font-size:14px;color:#444;font-weight:normal;transform:scaleX(1.0318);">31.12.2030</div>
<div class="a" style="left:1298px;top:435.24px;width:58px;height:25px;background:#cccccc;"><div class="a" style="left:3px;top:3px;width:19px;height:19px;background:#fff;"></div><div class="t" style="left:24.6px;top:8.9px;font-size:10px;font-weight:bold;color:#fff;transform:scaleX(1.03)">NEIN</div></div>
<div class="a" style="left:1502px;top:435.24px;width:58px;height:25px;background:#cccccc;"><div class="a" style="left:3px;top:3px;width:19px;height:19px;background:#fff;"></div><div class="t" style="left:24.6px;top:8.9px;font-size:10px;font-weight:bold;color:#fff;transform:scaleX(1.03)">NEIN</div></div>
<div class="a" style="left:1759px;top:435.94px;width:29px;height:24px;background:#8461d5;border-radius:3px;"></div>
<svg style="left:1767px;top:442.44px" width="13" height="13" viewBox="0 0 13 13"><path d="M8.2 2.7V0.6H3L0.6 3V9.5H4.8 M3 0.6V3H0.6 M7.2 2.7H12.1V12.3H4.8V5.1z M7.2 2.7V5.1H4.8" fill="none" stroke="#fff" stroke-width="1.1" stroke-linejoin="round"/></svg>
<div class="a" style="left:1791px;top:435.94px;width:27px;height:24px;background:#3c74d8;border-radius:3px;"></div>
<svg style="left:1798px;top:441.94px" width="13" height="13" viewBox="0 0 13 13"><path d="M9.6 1.2l2.2 2.2l-7.2 7.2l-3.1 0.9l0.9-3.1z" fill="#fff"/><path d="M2.9 8.3l1.8 1.8 M8.4 2.4l2.2 2.2" stroke="#3c74d8" stroke-width="0.7" fill="none"/></svg>
<div class="a" style="left:1821px;top:435.94px;width:26px;height:24px;background:#e03c2f;border-radius:3px;"></div>
<svg style="left:1829px;top:442.94px" width="11" height="11" viewBox="0 0 11 11"><path d="M0.3 2.1h10" stroke="#fff" stroke-width="1.3"/><path d="M3.4 1.6v-1h3.6v1" fill="none" stroke="#fff" stroke-width="1"/><path d="M1.2 2.6h8l-0.4 8h-7.2z" fill="#fff"/><path d="M3.7 4v5.2 M5.2 4v5.2 M6.7 4v5.2" stroke="#e03c2f" stroke-width="0.75"/></svg>
<div class="a" style="left:76px;top:468.64px;width:1780px;height:38.83px;background:#ffffff;"></div>
<div class="a" style="left:76px;top:507.47px;width:1780px;height:1px;background:#e3e3e3;"></div>
<svg style="left:85px;top:480.17px" width="12" height="14" viewBox="0 0 12 14"><path d="M0.8 0.6h7l3.9 3.9v9.1h-10.9z M7.8 0.6v3.9h3.9" fill="none" stroke="#444" stroke-width="1.15" stroke-linejoin="round"/></svg>
<div class="t" style="left:107.08px;top:480.52px;font-size:14px;color:#444;font-weight:normal;transform:scaleX(1.0086);">VM26</div>
<div class="t" style="left:190.99px;top:480.52px;font-size:14px;color:#444;font-weight:normal;transform:scaleX(1.1041);">1170</div>
<div class="t" style="left:378.99px;top:480.52px;font-size:14px;color:#444;font-weight:normal;transform:scaleX(1.1041);">1170</div>
<div class="t" style="left:603.26px;top:480.52px;font-size:14px;color:#444;font-weight:normal;transform:scaleX(0.9921);">MAT/DL (RS)</div>
<div class="t" style="left:888.59px;top:480.52px;font-size:14px;color:#444;font-weight:normal;transform:scaleX(0.9887);">2.60 %</div>
<svg style="left:1014px;top:482.47px" width="13" height="10" viewBox="0 0 13 10"><path d="M1.5 4.8l3.6 3.6l6.6-6.6" fill="none" stroke="#30b38a" stroke-width="2.9"/></svg>
<div class="t" style="left:1075.29px;top:480.52px;font-size:14px;color:#444;font-weight:normal;transform:scaleX(1.0247);">01.01.2024</div>
<div class="t" style="left:1186.06px;top:480.52px;font-size:14px;color:#444;font-weight:normal;transform:scaleX(1.0318);">31.12.2030</div>
<div class="a" style="left:1298px;top:475.07px;width:58px;height:25px;background:#cccccc;"><div class="a" style="left:3px;top:3px;width:19px;height:19px;background:#fff;"></div><div class="t" style="left:24.6px;top:8.9px;font-size:10px;font-weight:bold;color:#fff;transform:scaleX(1.03)">NEIN</div></div>
<div class="a" style="left:1759px;top:475.77px;width:29px;height:24px;background:#8461d5;border-radius:3px;"></div>
<svg style="left:1767px;top:482.27px" width="13" height="13" viewBox="0 0 13 13"><path d="M8.2 2.7V0.6H3L0.6 3V9.5H4.8 M3 0.6V3H0.6 M7.2 2.7H12.1V12.3H4.8V5.1z M7.2 2.7V5.1H4.8" fill="none" stroke="#fff" stroke-width="1.1" stroke-linejoin="round"/></svg>
<div class="a" style="left:1791px;top:475.77px;width:27px;height:24px;background:#3c74d8;border-radius:3px;"></div>
<svg style="left:1798px;top:481.77px" width="13" height="13" viewBox="0 0 13 13"><path d="M9.6 1.2l2.2 2.2l-7.2 7.2l-3.1 0.9l0.9-3.1z" fill="#fff"/><path d="M2.9 8.3l1.8 1.8 M8.4 2.4l2.2 2.2" stroke="#3c74d8" stroke-width="0.7" fill="none"/></svg>
<div class="a" style="left:1821px;top:475.77px;width:26px;height:24px;background:#e03c2f;border-radius:3px;"></div>
<svg style="left:1829px;top:482.77px" width="11" height="11" viewBox="0 0 11 11"><path d="M0.3 2.1h10" stroke="#fff" stroke-width="1.3"/><path d="M3.4 1.6v-1h3.6v1" fill="none" stroke="#fff" stroke-width="1"/><path d="M1.2 2.6h8l-0.4 8h-7.2z" fill="#fff"/><path d="M3.7 4v5.2 M5.2 4v5.2 M6.7 4v5.2" stroke="#e03c2f" stroke-width="0.75"/></svg>
<div class="a" style="left:76px;top:508.47px;width:1780px;height:38.83px;background:#f6f6f6;"></div>
<div class="a" style="left:76px;top:547.30px;width:1780px;height:1px;background:#e3e3e3;"></div>
<svg style="left:85px;top:520.00px" width="12" height="14" viewBox="0 0 12 14"><path d="M0.8 0.6h7l3.9 3.9v9.1h-10.9z M7.8 0.6v3.9h3.9" fill="none" stroke="#444" stroke-width="1.15" stroke-linejoin="round"/></svg>
<div class="t" style="left:107.08px;top:520.35px;font-size:14px;color:#444;font-weight:normal;transform:scaleX(1.0089);">VM38</div>
<div class="t" style="left:190.99px;top:520.35px;font-size:14px;color:#444;font-weight:normal;transform:scaleX(1.1041);">1170</div>
<div class="t" style="left:378.99px;top:520.35px;font-size:14px;color:#444;font-weight:normal;transform:scaleX(1.1041);">1170</div>
<div class="t" style="left:603.27px;top:520.35px;font-size:14px;color:#444;font-weight:normal;transform:scaleX(0.9859);">MAT/DL (SS)</div>
<div class="t" style="left:888.59px;top:520.35px;font-size:14px;color:#444;font-weight:normal;transform:scaleX(0.9889);">3.80 %</div>
<svg style="left:1014px;top:522.30px" width="13" height="10" viewBox="0 0 13 10"><path d="M1.5 4.8l3.6 3.6l6.6-6.6" fill="none" stroke="#30b38a" stroke-width="2.9"/></svg>
<div class="t" style="left:1075.29px;top:520.35px;font-size:14px;color:#444;font-weight:normal;transform:scaleX(1.0247);">01.01.2024</div>
<div class="t" style="left:1186.06px;top:520.35px;font-size:14px;color:#444;font-weight:normal;transform:scaleX(1.0318);">31.12.2030</div>
<div class="a" style="left:1298px;top:514.90px;width:58px;height:25px;background:#cccccc;"><div class="a" style="left:3px;top:3px;width:19px;height:19px;background:#fff;"></div><div class="t" style="left:24.6px;top:8.9px;font-size:10px;font-weight:bold;color:#fff;transform:scaleX(1.03)">NEIN</div></div>
<div class="a" style="left:1759px;top:515.60px;width:29px;height:24px;background:#8461d5;border-radius:3px;"></div>
<svg style="left:1767px;top:522.10px" width="13" height="13" viewBox="0 0 13 13"><path d="M8.2 2.7V0.6H3L0.6 3V9.5H4.8 M3 0.6V3H0.6 M7.2 2.7H12.1V12.3H4.8V5.1z M7.2 2.7V5.1H4.8" fill="none" stroke="#fff" stroke-width="1.1" stroke-linejoin="round"/></svg>
<div class="a" style="left:1791px;top:515.60px;width:27px;height:24px;background:#3c74d8;border-radius:3px;"></div>
<svg style="left:1798px;top:521.60px" width="13" height="13" viewBox="0 0 13 13"><path d="M9.6 1.2l2.2 2.2l-7.2 7.2l-3.1 0.9l0.9-3.1z" fill="#fff"/><path d="M2.9 8.3l1.8 1.8 M8.4 2.4l2.2 2.2" stroke="#3c74d8" stroke-width="0.7" fill="none"/></svg>
<div class="a" style="left:1821px;top:515.60px;width:26px;height:24px;background:#e03c2f;border-radius:3px;"></div>
<svg style="left:1829px;top:522.60px" width="11" height="11" viewBox="0 0 11 11"><path d="M0.3 2.1h10" stroke="#fff" stroke-width="1.3"/><path d="M3.4 1.6v-1h3.6v1" fill="none" stroke="#fff" stroke-width="1"/><path d="M1.2 2.6h8l-0.4 8h-7.2z" fill="#fff"/><path d="M3.7 4v5.2 M5.2 4v5.2 M6.7 4v5.2" stroke="#e03c2f" stroke-width="0.75"/></svg>
<div class="a" style="left:76px;top:548.30px;width:1780px;height:38.83px;background:#ffffff;"></div>
<div class="a" style="left:76px;top:587.13px;width:1780px;height:1px;background:#e3e3e3;"></div>
<svg style="left:85px;top:559.83px" width="12" height="14" viewBox="0 0 12 14"><path d="M0.8 0.6h7l3.9 3.9v9.1h-10.9z M7.8 0.6v3.9h3.9" fill="none" stroke="#444" stroke-width="1.15" stroke-linejoin="round"/></svg>
<div class="t" style="left:106.94px;top:560.18px;font-size:14px;color:#444;font-weight:normal;transform:scaleX(0.9713);">ZOLLB</div>
<div class="t" style="left:191.54px;top:560.18px;font-size:14px;color:#444;font-weight:normal;transform:scaleX(1.0548);">1171</div>
<div class="t" style="left:379.54px;top:560.18px;font-size:14px;color:#444;font-weight:normal;transform:scaleX(1.0548);">1171</div>
<div class="t" style="left:603.18px;top:560.18px;font-size:14px;color:#444;font-weight:normal;transform:scaleX(1.0583);">Einf&uuml;hr Inv/Ba</div>
<div class="t" style="left:888.38px;top:560.18px;font-size:14px;color:#444;font-weight:normal;transform:scaleX(1.0043);">100.00 %</div>
<svg style="left:1014px;top:562.13px" width="13" height="10" viewBox="0 0 13 10"><path d="M1.5 4.8l3.6 3.6l6.6-6.6" fill="none" stroke="#30b38a" stroke-width="2.9"/></svg>
<div class="t" style="left:1075.29px;top:560.18px;font-size:14px;color:#444;font-weight:normal;transform:scaleX(1.0247);">01.01.2024</div>
<div class="t" style="left:1186.06px;top:560.18px;font-size:14px;color:#444;font-weight:normal;transform:scaleX(1.0318);">31.12.2030</div>
<div class="a" style="left:1298px;top:554.73px;width:58px;height:25px;background:#cccccc;"><div class="a" style="left:3px;top:3px;width:19px;height:19px;background:#fff;"></div><div class="t" style="left:24.6px;top:8.9px;font-size:10px;font-weight:bold;color:#fff;transform:scaleX(1.03)">NEIN</div></div>
<div class="a" style="left:1759px;top:555.43px;width:29px;height:24px;background:#8461d5;border-radius:3px;"></div>
<svg style="left:1767px;top:561.93px" width="13" height="13" viewBox="0 0 13 13"><path d="M8.2 2.7V0.6H3L0.6 3V9.5H4.8 M3 0.6V3H0.6 M7.2 2.7H12.1V12.3H4.8V5.1z M7.2 2.7V5.1H4.8" fill="none" stroke="#fff" stroke-width="1.1" stroke-linejoin="round"/></svg>
<div class="a" style="left:1791px;top:555.43px;width:27px;height:24px;background:#3c74d8;border-radius:3px;"></div>
<svg style="left:1798px;top:561.43px" width="13" height="13" viewBox="0 0 13 13"><path d="M9.6 1.2l2.2 2.2l-7.2 7.2l-3.1 0.9l0.9-3.1z" fill="#fff"/><path d="M2.9 8.3l1.8 1.8 M8.4 2.4l2.2 2.2" stroke="#3c74d8" stroke-width="0.7" fill="none"/></svg>
<div class="a" style="left:1821px;top:555.43px;width:26px;height:24px;background:#e03c2f;border-radius:3px;"></div>
<svg style="left:1829px;top:562.43px" width="11" height="11" viewBox="0 0 11 11"><path d="M0.3 2.1h10" stroke="#fff" stroke-width="1.3"/><path d="M3.4 1.6v-1h3.6v1" fill="none" stroke="#fff" stroke-width="1"/><path d="M1.2 2.6h8l-0.4 8h-7.2z" fill="#fff"/><path d="M3.7 4v5.2 M5.2 4v5.2 M6.7 4v5.2" stroke="#e03c2f" stroke-width="0.75"/></svg>
<div class="a" style="left:76px;top:588.13px;width:1780px;height:38.83px;background:#f6f6f6;"></div>
<div class="a" style="left:76px;top:626.96px;width:1780px;height:1px;background:#e3e3e3;"></div>
<svg style="left:85px;top:599.66px" width="12" height="14" viewBox="0 0 12 14"><path d="M0.8 0.6h7l3.9 3.9v9.1h-10.9z M7.8 0.6v3.9h3.9" fill="none" stroke="#444" stroke-width="1.15" stroke-linejoin="round"/></svg>
<div class="t" style="left:107.12px;top:600.01px;font-size:14px;color:#444;font-weight:normal;transform:scaleX(0.8693);">VSF</div>
<div class="t" style="left:191.54px;top:600.01px;font-size:14px;color:#444;font-weight:normal;transform:scaleX(1.0548);">1171</div>
<div class="t" style="left:379.54px;top:600.01px;font-size:14px;color:#444;font-weight:normal;transform:scaleX(1.0548);">1171</div>
<div class="t" style="left:604.15px;top:600.01px;font-size:14px;color:#444;font-weight:normal;transform:scaleX(1.0923);">Vorsteuerfrei</div>
<div class="t" style="left:888.71px;top:600.01px;font-size:14px;color:#444;font-weight:normal;transform:scaleX(0.9861);">0.00 %</div>
<svg style="left:1014px;top:601.96px" width="13" height="10" viewBox="0 0 13 10"><path d="M1.5 4.8l3.6 3.6l6.6-6.6" fill="none" stroke="#30b38a" stroke-width="2.9"/></svg>
<div class="t" style="left:1075.29px;top:600.01px;font-size:14px;color:#444;font-weight:normal;transform:scaleX(1.0247);">01.01.2024</div>
<div class="t" style="left:1186.06px;top:600.01px;font-size:14px;color:#444;font-weight:normal;transform:scaleX(1.0318);">31.12.2030</div>
<div class="a" style="left:1298px;top:594.56px;width:58px;height:25px;background:#cccccc;"><div class="a" style="left:3px;top:3px;width:19px;height:19px;background:#fff;"></div><div class="t" style="left:24.6px;top:8.9px;font-size:10px;font-weight:bold;color:#fff;transform:scaleX(1.03)">NEIN</div></div>
<div class="a" style="left:1502px;top:594.56px;width:58px;height:25px;background:#cccccc;"><div class="a" style="left:3px;top:3px;width:19px;height:19px;background:#fff;"></div><div class="t" style="left:24.6px;top:8.9px;font-size:10px;font-weight:bold;color:#fff;transform:scaleX(1.03)">NEIN</div></div>
<div class="a" style="left:1759px;top:595.26px;width:29px;height:24px;background:#8461d5;border-radius:3px;"></div>
<svg style="left:1767px;top:601.76px" width="13" height="13" viewBox="0 0 13 13"><path d="M8.2 2.7V0.6H3L0.6 3V9.5H4.8 M3 0.6V3H0.6 M7.2 2.7H12.1V12.3H4.8V5.1z M7.2 2.7V5.1H4.8" fill="none" stroke="#fff" stroke-width="1.1" stroke-linejoin="round"/></svg>
<div class="a" style="left:1791px;top:595.26px;width:27px;height:24px;background:#3c74d8;border-radius:3px;"></div>
<svg style="left:1798px;top:601.26px" width="13" height="13" viewBox="0 0 13 13"><path d="M9.6 1.2l2.2 2.2l-7.2 7.2l-3.1 0.9l0.9-3.1z" fill="#fff"/><path d="M2.9 8.3l1.8 1.8 M8.4 2.4l2.2 2.2" stroke="#3c74d8" stroke-width="0.7" fill="none"/></svg>
<div class="a" style="left:1821px;top:595.26px;width:26px;height:24px;background:#e03c2f;border-radius:3px;"></div>
<svg style="left:1829px;top:602.26px" width="11" height="11" viewBox="0 0 11 11"><path d="M0.3 2.1h10" stroke="#fff" stroke-width="1.3"/><path d="M3.4 1.6v-1h3.6v1" fill="none" stroke="#fff" stroke-width="1"/><path d="M1.2 2.6h8l-0.4 8h-7.2z" fill="#fff"/><path d="M3.7 4v5.2 M5.2 4v5.2 M6.7 4v5.2" stroke="#e03c2f" stroke-width="0.75"/></svg>
<div class="a" style="left:76px;top:627.96px;width:1780px;height:38.83px;background:#ffffff;"></div>
<div class="a" style="left:76px;top:666.79px;width:1780px;height:1px;background:#e3e3e3;"></div>
<svg style="left:85px;top:639.49px" width="12" height="14" viewBox="0 0 12 14"><path d="M0.8 0.6h7l3.9 3.9v9.1h-10.9z M7.8 0.6v3.9h3.9" fill="none" stroke="#444" stroke-width="1.15" stroke-linejoin="round"/></svg>
<div class="t" style="left:107.08px;top:639.84px;font-size:14px;color:#444;font-weight:normal;transform:scaleX(0.9831);">VB26</div>
<div class="t" style="left:191.54px;top:639.84px;font-size:14px;color:#444;font-weight:normal;transform:scaleX(1.0548);">1171</div>
<div class="t" style="left:379.54px;top:639.84px;font-size:14px;color:#444;font-weight:normal;transform:scaleX(1.0548);">1171</div>
<div class="t" style="left:603.15px;top:639.84px;font-size:14px;color:#444;font-weight:normal;transform:scaleX(0.9944);">Inv/BA (RS)</div>
<div class="t" style="left:888.59px;top:639.84px;font-size:14px;color:#444;font-weight:normal;transform:scaleX(0.9887);">2.60 %</div>
<svg style="left:1014px;top:641.79px" width="13" height="10" viewBox="0 0 13 10"><path d="M1.5 4.8l3.6 3.6l6.6-6.6" fill="none" stroke="#30b38a" stroke-width="2.9"/></svg>
<div class="t" style="left:1075.29px;top:639.84px;font-size:14px;color:#444;font-weight:normal;transform:scaleX(1.0247);">01.01.2024</div>
<div class="t" style="left:1186.06px;top:639.84px;font-size:14px;color:#444;font-weight:normal;transform:scaleX(1.0318);">31.12.2030</div>
<div class="a" style="left:1298px;top:634.39px;width:58px;height:25px;background:#cccccc;"><div class="a" style="left:3px;top:3px;width:19px;height:19px;background:#fff;"></div><div class="t" style="left:24.6px;top:8.9px;font-size:10px;font-weight:bold;color:#fff;transform:scaleX(1.03)">NEIN</div></div>
<div class="a" style="left:1759px;top:635.09px;width:29px;height:24px;background:#8461d5;border-radius:3px;"></div>
<svg style="left:1767px;top:641.59px" width="13" height="13" viewBox="0 0 13 13"><path d="M8.2 2.7V0.6H3L0.6 3V9.5H4.8 M3 0.6V3H0.6 M7.2 2.7H12.1V12.3H4.8V5.1z M7.2 2.7V5.1H4.8" fill="none" stroke="#fff" stroke-width="1.1" stroke-linejoin="round"/></svg>
<div class="a" style="left:1791px;top:635.09px;width:27px;height:24px;background:#3c74d8;border-radius:3px;"></div>
<svg style="left:1798px;top:641.09px" width="13" height="13" viewBox="0 0 13 13"><path d="M9.6 1.2l2.2 2.2l-7.2 7.2l-3.1 0.9l0.9-3.1z" fill="#fff"/><path d="M2.9 8.3l1.8 1.8 M8.4 2.4l2.2 2.2" stroke="#3c74d8" stroke-width="0.7" fill="none"/></svg>
<div class="a" style="left:1821px;top:635.09px;width:26px;height:24px;background:#e03c2f;border-radius:3px;"></div>
<svg style="left:1829px;top:642.09px" width="11" height="11" viewBox="0 0 11 11"><path d="M0.3 2.1h10" stroke="#fff" stroke-width="1.3"/><path d="M3.4 1.6v-1h3.6v1" fill="none" stroke="#fff" stroke-width="1"/><path d="M1.2 2.6h8l-0.4 8h-7.2z" fill="#fff"/><path d="M3.7 4v5.2 M5.2 4v5.2 M6.7 4v5.2" stroke="#e03c2f" stroke-width="0.75"/></svg>
<div class="a" style="left:76px;top:667.79px;width:1780px;height:38.83px;background:#f6f6f6;"></div>
<div class="a" style="left:76px;top:706.62px;width:1780px;height:1px;background:#e3e3e3;"></div>
<svg style="left:85px;top:679.32px" width="12" height="14" viewBox="0 0 12 14"><path d="M0.8 0.6h7l3.9 3.9v9.1h-10.9z M7.8 0.6v3.9h3.9" fill="none" stroke="#444" stroke-width="1.15" stroke-linejoin="round"/></svg>
<div class="t" style="left:107.08px;top:679.67px;font-size:14px;color:#444;font-weight:normal;transform:scaleX(0.9839);">VB38</div>
<div class="t" style="left:191.54px;top:679.67px;font-size:14px;color:#444;font-weight:normal;transform:scaleX(1.0548);">1171</div>
<div class="t" style="left:379.54px;top:679.67px;font-size:14px;color:#444;font-weight:normal;transform:scaleX(1.0548);">1171</div>
<div class="t" style="left:603.15px;top:679.67px;font-size:14px;color:#444;font-weight:normal;transform:scaleX(0.9883);">Inv/BA (SS)</div>
<div class="t" style="left:888.59px;top:679.67px;font-size:14px;color:#444;font-weight:normal;transform:scaleX(0.9889);">3.80 %</div>
<svg style="left:1014px;top:681.62px" width="13" height="10" viewBox="0 0 13 10"><path d="M1.5 4.8l3.6 3.6l6.6-6.6" fill="none" stroke="#30b38a" stroke-width="2.9"/></svg>
<div class="t" style="left:1075.29px;top:679.67px;font-size:14px;color:#444;font-weight:normal;transform:scaleX(1.0247);">01.01.2024</div>
<div class="t" style="left:1186.06px;top:679.67px;font-size:14px;color:#444;font-weight:normal;transform:scaleX(1.0318);">31.12.2030</div>
<div class="a" style="left:1298px;top:674.22px;width:58px;height:25px;background:#cccccc;"><div class="a" style="left:3px;top:3px;width:19px;height:19px;background:#fff;"></div><div class="t" style="left:24.6px;top:8.9px;font-size:10px;font-weight:bold;color:#fff;transform:scaleX(1.03)">NEIN</div></div>
<div class="a" style="left:1759px;top:674.92px;width:29px;height:24px;background:#8461d5;border-radius:3px;"></div>
<svg style="left:1767px;top:681.42px" width="13" height="13" viewBox="0 0 13 13"><path d="M8.2 2.7V0.6H3L0.6 3V9.5H4.8 M3 0.6V3H0.6 M7.2 2.7H12.1V12.3H4.8V5.1z M7.2 2.7V5.1H4.8" fill="none" stroke="#fff" stroke-width="1.1" stroke-linejoin="round"/></svg>
<div class="a" style="left:1791px;top:674.92px;width:27px;height:24px;background:#3c74d8;border-radius:3px;"></div>
<svg style="left:1798px;top:680.92px" width="13" height="13" viewBox="0 0 13 13"><path d="M9.6 1.2l2.2 2.2l-7.2 7.2l-3.1 0.9l0.9-3.1z" fill="#fff"/><path d="M2.9 8.3l1.8 1.8 M8.4 2.4l2.2 2.2" stroke="#3c74d8" stroke-width="0.7" fill="none"/></svg>
<div class="a" style="left:1821px;top:674.92px;width:26px;height:24px;background:#e03c2f;border-radius:3px;"></div>
<svg style="left:1829px;top:681.92px" width="11" height="11" viewBox="0 0 11 11"><path d="M0.3 2.1h10" stroke="#fff" stroke-width="1.3"/><path d="M3.4 1.6v-1h3.6v1" fill="none" stroke="#fff" stroke-width="1"/><path d="M1.2 2.6h8l-0.4 8h-7.2z" fill="#fff"/><path d="M3.7 4v5.2 M5.2 4v5.2 M6.7 4v5.2" stroke="#e03c2f" stroke-width="0.75"/></svg>
<div class="a" style="left:76px;top:707.62px;width:1780px;height:38.83px;background:#ffffff;"></div>
<div class="a" style="left:76px;top:746.45px;width:1780px;height:1px;background:#e3e3e3;"></div>
<svg style="left:85px;top:719.15px" width="12" height="14" viewBox="0 0 12 14"><path d="M0.8 0.6h7l3.9 3.9v9.1h-10.9z M7.8 0.6v3.9h3.9" fill="none" stroke="#444" stroke-width="1.15" stroke-linejoin="round"/></svg>
<div class="t" style="left:107.09px;top:719.50px;font-size:14px;color:#444;font-weight:normal;transform:scaleX(0.9597);">VB81</div>
<div class="t" style="left:191.54px;top:719.50px;font-size:14px;color:#444;font-weight:normal;transform:scaleX(1.0548);">1171</div>
<div class="t" style="left:379.54px;top:719.50px;font-size:14px;color:#444;font-weight:normal;transform:scaleX(1.0548);">1171</div>
<div class="t" style="left:603.11px;top:719.50px;font-size:14px;color:#444;font-weight:normal;transform:scaleX(1.0183);">Inv/BA (NS)</div>
<div class="t" style="left:888.65px;top:719.50px;font-size:14px;color:#444;font-weight:normal;transform:scaleX(0.9875);">8.10 %</div>
<svg style="left:1014px;top:721.45px" width="13" height="10" viewBox="0 0 13 10"><path d="M1.5 4.8l3.6 3.6l6.6-6.6" fill="none" stroke="#30b38a" stroke-width="2.9"/></svg>
<div class="t" style="left:1075.29px;top:719.50px;font-size:14px;color:#444;font-weight:normal;transform:scaleX(1.0247);">01.01.2024</div>
<div class="t" style="left:1186.06px;top:719.50px;font-size:14px;color:#444;font-weight:normal;transform:scaleX(1.0318);">31.12.2030</div>
<div class="a" style="left:1298px;top:714.05px;width:58px;height:25px;background:#cccccc;"><div class="a" style="left:3px;top:3px;width:19px;height:19px;background:#fff;"></div><div class="t" style="left:24.6px;top:8.9px;font-size:10px;font-weight:bold;color:#fff;transform:scaleX(1.03)">NEIN</div></div>
<div class="a" style="left:1759px;top:714.75px;width:29px;height:24px;background:#8461d5;border-radius:3px;"></div>
<svg style="left:1767px;top:721.25px" width="13" height="13" viewBox="0 0 13 13"><path d="M8.2 2.7V0.6H3L0.6 3V9.5H4.8 M3 0.6V3H0.6 M7.2 2.7H12.1V12.3H4.8V5.1z M7.2 2.7V5.1H4.8" fill="none" stroke="#fff" stroke-width="1.1" stroke-linejoin="round"/></svg>
<div class="a" style="left:1791px;top:714.75px;width:27px;height:24px;background:#3c74d8;border-radius:3px;"></div>
<svg style="left:1798px;top:720.75px" width="13" height="13" viewBox="0 0 13 13"><path d="M9.6 1.2l2.2 2.2l-7.2 7.2l-3.1 0.9l0.9-3.1z" fill="#fff"/><path d="M2.9 8.3l1.8 1.8 M8.4 2.4l2.2 2.2" stroke="#3c74d8" stroke-width="0.7" fill="none"/></svg>
<div class="a" style="left:1821px;top:714.75px;width:26px;height:24px;background:#e03c2f;border-radius:3px;"></div>
<svg style="left:1829px;top:721.75px" width="11" height="11" viewBox="0 0 11 11"><path d="M0.3 2.1h10" stroke="#fff" stroke-width="1.3"/><path d="M3.4 1.6v-1h3.6v1" fill="none" stroke="#fff" stroke-width="1"/><path d="M1.2 2.6h8l-0.4 8h-7.2z" fill="#fff"/><path d="M3.7 4v5.2 M5.2 4v5.2 M6.7 4v5.2" stroke="#e03c2f" stroke-width="0.75"/></svg>
<div class="a" style="left:76px;top:747.45px;width:1780px;height:38.83px;background:#f6f6f6;"></div>
<div class="a" style="left:76px;top:786.28px;width:1780px;height:1px;background:#e3e3e3;"></div>
<svg style="left:85px;top:758.98px" width="12" height="14" viewBox="0 0 12 14"><path d="M0.8 0.6h7l3.9 3.9v9.1h-10.9z M7.8 0.6v3.9h3.9" fill="none" stroke="#444" stroke-width="1.15" stroke-linejoin="round"/></svg>
<div class="t" style="left:106.50px;top:759.33px;font-size:14px;color:#444;font-weight:normal;transform:scaleX(0.9833);">ULA</div>
<div class="t" style="left:191.24px;top:759.33px;font-size:14px;color:#444;font-weight:normal;transform:scaleX(1.0597);">2200</div>
<div class="t" style="left:379.24px;top:759.33px;font-size:14px;color:#444;font-weight:normal;transform:scaleX(1.0597);">2200</div>
<div class="t" style="left:603.18px;top:759.33px;font-size:14px;color:#444;font-weight:normal;transform:scaleX(1.0614);">Leistungen im Ausland</div>
<div class="t" style="left:888.71px;top:759.33px;font-size:14px;color:#444;font-weight:normal;transform:scaleX(0.9861);">0.00 %</div>
<svg style="left:1014px;top:761.28px" width="13" height="10" viewBox="0 0 13 10"><path d="M1.5 4.8l3.6 3.6l6.6-6.6" fill="none" stroke="#30b38a" stroke-width="2.9"/></svg>
<div class="t" style="left:1075.29px;top:759.33px;font-size:14px;color:#444;font-weight:normal;transform:scaleX(1.0247);">01.01.2024</div>
<div class="t" style="left:1186.06px;top:759.33px;font-size:14px;color:#444;font-weight:normal;transform:scaleX(1.0318);">31.12.2030</div>
<div class="a" style="left:1298px;top:753.88px;width:58px;height:25px;background:#cccccc;"><div class="a" style="left:3px;top:3px;width:19px;height:19px;background:#fff;"></div><div class="t" style="left:24.6px;top:8.9px;font-size:10px;font-weight:bold;color:#fff;transform:scaleX(1.03)">NEIN</div></div>
<div class="a" style="left:1502px;top:753.88px;width:58px;height:25px;background:#cccccc;"><div class="a" style="left:3px;top:3px;width:19px;height:19px;background:#fff;"></div><div class="t" style="left:24.6px;top:8.9px;font-size:10px;font-weight:bold;color:#fff;transform:scaleX(1.03)">NEIN</div></div>
<div class="a" style="left:1759px;top:754.58px;width:29px;height:24px;background:#8461d5;border-radius:3px;"></div>
<svg style="left:1767px;top:761.08px" width="13" height="13" viewBox="0 0 13 13"><path d="M8.2 2.7V0.6H3L0.6 3V9.5H4.8 M3 0.6V3H0.6 M7.2 2.7H12.1V12.3H4.8V5.1z M7.2 2.7V5.1H4.8" fill="none" stroke="#fff" stroke-width="1.1" stroke-linejoin="round"/></svg>
<div class="a" style="left:1791px;top:754.58px;width:27px;height:24px;background:#3c74d8;border-radius:3px;"></div>
<svg style="left:1798px;top:760.58px" width="13" height="13" viewBox="0 0 13 13"><path d="M9.6 1.2l2.2 2.2l-7.2 7.2l-3.1 0.9l0.9-3.1z" fill="#fff"/><path d="M2.9 8.3l1.8 1.8 M8.4 2.4l2.2 2.2" stroke="#3c74d8" stroke-width="0.7" fill="none"/></svg>
<div class="a" style="left:1821px;top:754.58px;width:26px;height:24px;background:#e03c2f;border-radius:3px;"></div>
<svg style="left:1829px;top:761.58px" width="11" height="11" viewBox="0 0 11 11"><path d="M0.3 2.1h10" stroke="#fff" stroke-width="1.3"/><path d="M3.4 1.6v-1h3.6v1" fill="none" stroke="#fff" stroke-width="1"/><path d="M1.2 2.6h8l-0.4 8h-7.2z" fill="#fff"/><path d="M3.7 4v5.2 M5.2 4v5.2 M6.7 4v5.2" stroke="#e03c2f" stroke-width="0.75"/></svg>
<div class="a" style="left:76px;top:787.28px;width:1780px;height:38.83px;background:#ffffff;"></div>
<div class="a" style="left:76px;top:826.11px;width:1780px;height:1px;background:#e3e3e3;"></div>
<svg style="left:85px;top:798.81px" width="12" height="14" viewBox="0 0 12 14"><path d="M0.8 0.6h7l3.9 3.9v9.1h-10.9z M7.8 0.6v3.9h3.9" fill="none" stroke="#444" stroke-width="1.15" stroke-linejoin="round"/></svg>
<div class="t" style="left:106.17px;top:799.16px;font-size:14px;color:#444;font-weight:normal;transform:scaleX(0.9825);">MEL</div>
<div class="t" style="left:191.24px;top:799.16px;font-size:14px;color:#444;font-weight:normal;transform:scaleX(1.0597);">2200</div>
<div class="t" style="left:379.24px;top:799.16px;font-size:14px;color:#444;font-weight:normal;transform:scaleX(1.0597);">2200</div>
<div class="t" style="left:603.52px;top:799.16px;font-size:14px;color:#444;font-weight:normal;transform:scaleX(1.0737);">&Uuml;bertragung im Meldeverfahren</div>
<div class="t" style="left:888.71px;top:799.16px;font-size:14px;color:#444;font-weight:normal;transform:scaleX(0.9861);">0.00 %</div>
<svg style="left:1014px;top:801.11px" width="13" height="10" viewBox="0 0 13 10"><path d="M1.5 4.8l3.6 3.6l6.6-6.6" fill="none" stroke="#30b38a" stroke-width="2.9"/></svg>
<div class="t" style="left:1075.29px;top:799.16px;font-size:14px;color:#444;font-weight:normal;transform:scaleX(1.0247);">01.01.2024</div>
<div class="t" style="left:1186.06px;top:799.16px;font-size:14px;color:#444;font-weight:normal;transform:scaleX(1.0318);">31.12.2030</div>
<div class="a" style="left:1298px;top:793.71px;width:58px;height:25px;background:#cccccc;"><div class="a" style="left:3px;top:3px;width:19px;height:19px;background:#fff;"></div><div class="t" style="left:24.6px;top:8.9px;font-size:10px;font-weight:bold;color:#fff;transform:scaleX(1.03)">NEIN</div></div>
<div class="a" style="left:1502px;top:793.71px;width:58px;height:25px;background:#cccccc;"><div class="a" style="left:3px;top:3px;width:19px;height:19px;background:#fff;"></div><div class="t" style="left:24.6px;top:8.9px;font-size:10px;font-weight:bold;color:#fff;transform:scaleX(1.03)">NEIN</div></div>
<div class="a" style="left:1759px;top:794.41px;width:29px;height:24px;background:#8461d5;border-radius:3px;"></div>
<svg style="left:1767px;top:800.91px" width="13" height="13" viewBox="0 0 13 13"><path d="M8.2 2.7V0.6H3L0.6 3V9.5H4.8 M3 0.6V3H0.6 M7.2 2.7H12.1V12.3H4.8V5.1z M7.2 2.7V5.1H4.8" fill="none" stroke="#fff" stroke-width="1.1" stroke-linejoin="round"/></svg>
<div class="a" style="left:1791px;top:794.41px;width:27px;height:24px;background:#3c74d8;border-radius:3px;"></div>
<svg style="left:1798px;top:800.41px" width="13" height="13" viewBox="0 0 13 13"><path d="M9.6 1.2l2.2 2.2l-7.2 7.2l-3.1 0.9l0.9-3.1z" fill="#fff"/><path d="M2.9 8.3l1.8 1.8 M8.4 2.4l2.2 2.2" stroke="#3c74d8" stroke-width="0.7" fill="none"/></svg>
<div class="a" style="left:1821px;top:794.41px;width:26px;height:24px;background:#e03c2f;border-radius:3px;"></div>
<svg style="left:1829px;top:801.41px" width="11" height="11" viewBox="0 0 11 11"><path d="M0.3 2.1h10" stroke="#fff" stroke-width="1.3"/><path d="M3.4 1.6v-1h3.6v1" fill="none" stroke="#fff" stroke-width="1"/><path d="M1.2 2.6h8l-0.4 8h-7.2z" fill="#fff"/><path d="M3.7 4v5.2 M5.2 4v5.2 M6.7 4v5.2" stroke="#e03c2f" stroke-width="0.75"/></svg>
<div class="a" style="left:76px;top:827.11px;width:1780px;height:38.83px;background:#f6f6f6;"></div>
<div class="a" style="left:76px;top:865.94px;width:1780px;height:1px;background:#e3e3e3;"></div>
<div class="a" style="left:1298px;top:833.54px;width:58px;height:25px;background:#cccccc;"><div class="a" style="left:3px;top:3px;width:19px;height:19px;background:#fff;"></div><div class="t" style="left:24.6px;top:8.9px;font-size:10px;font-weight:bold;color:#fff;transform:scaleX(1.03)">NEIN</div></div>
<div class="a" style="left:60px;top:835px;width:1811px;height:42px;background:#f5f5f5;border-top:1px solid #dcdcdc;box-sizing:border-box;"></div>
<div class="t" style="left:75.04px;top:850.45px;font-size:14px;color:#999;font-weight:normal;transform:scaleX(0.9174);">&copy; 2025 <b>ALCOLM Business Software</b></div>
<div class="t" style="left:1662.00px;top:850.45px;font-size:14px;color:#999;font-weight:normal;transform:scaleX(0.9630);">Dienstag, 14. Oktober 2025</div>
<div class="a" style="left:1838px;top:845px;width:25px;height:25px;background:#e4e4e4;border-radius:3px;"></div>
<svg style="left:1845px;top:852.5px" width="11" height="11" viewBox="0 0 11 11"><path d="M5.5 0.5l5 5h-3v5h-4v-5h-3z" fill="#8a8a8a"/></svg>
<div class="a" style="left:0;top:860px;width:20px;height:17px;background:#0c0d12;"></div>
<div class="a" style="left:0;top:0;width:60px;height:877px;background:#2c3040;box-sizing:border-box;border-left:1px solid #4b4f5c;border-bottom-left-radius:9px;"></div>
<div class="t" style="left:0;width:50px;text-align:center;top:25.59px;font-size:12.3px;color:#c8c8c8;transform:scaleX(0.9);transform-origin:25px 0;">DA</div>
<div class="t" style="left:0;width:50px;text-align:center;top:67.59px;font-size:12.3px;color:#c8c8c8;transform:scaleX(0.9);transform-origin:25px 0;">TE</div>
<div class="t" style="left:0;width:50px;text-align:center;top:109.59px;font-size:12.3px;color:#c8c8c8;transform:scaleX(0.9);transform-origin:25px 0;">TE</div>
<div class="t" style="left:0;width:50px;text-align:center;top:151.59px;font-size:12.3px;color:#c8c8c8;transform:scaleX(0.9);transform-origin:25px 0;">ST</div>
<div class="t" style="left:0;width:50px;text-align:center;top:193.59px;font-size:12.3px;color:#c8c8c8;transform:scaleX(0.9);transform-origin:25px 0;">FA</div>
<div class="t" style="left:0;width:50px;text-align:center;top:235.59px;font-size:12.3px;color:#c8c8c8;transform:scaleX(0.9);transform-origin:25px 0;">E-</div>
<div class="t" style="left:0;width:50px;text-align:center;top:277.59px;font-size:12.3px;color:#c8c8c8;transform:scaleX(0.9);transform-origin:25px 0;">OF</div>
<div class="t" style="left:0;width:50px;text-align:center;top:319.59px;font-size:12.3px;color:#c8c8c8;transform:scaleX(0.9);transform-origin:25px 0;">DI</div>
<div class="t" style="left:0;width:50px;text-align:center;top:361.59px;font-size:12.3px;color:#c8c8c8;transform:scaleX(0.9);transform-origin:25px 0;">PR</div>
<div class="t" style="left:0;width:50px;text-align:center;top:403.59px;font-size:12.3px;color:#c8c8c8;transform:scaleX(0.9);transform-origin:25px 0;">WE</div>
<div class="t" style="left:0;width:50px;text-align:center;top:445.59px;font-size:12.3px;color:#c8c8c8;transform:scaleX(0.9);transform-origin:25px 0;">WA</div>
<div class="t" style="left:0;width:50px;text-align:center;top:487.59px;font-size:12.3px;color:#c8c8c8;transform:scaleX(0.9);transform-origin:25px 0;">DE</div>
<div class="t" style="left:0;width:50px;text-align:center;top:529.59px;font-size:12.3px;color:#c8c8c8;transform:scaleX(0.9);transform-origin:25px 0;">KR</div>
<div class="t" style="left:0;width:50px;text-align:center;top:571.59px;font-size:12.3px;color:#c8c8c8;transform:scaleX(0.9);transform-origin:25px 0;">DE</div>
<div class="t" style="left:0;width:50px;text-align:center;top:613.59px;font-size:12.3px;color:#c8c8c8;transform:scaleX(0.9);transform-origin:25px 0;">KR</div>
<div class="t" style="left:0;width:50px;text-align:center;top:655.59px;font-size:12.3px;color:#c8c8c8;transform:scaleX(0.9);transform-origin:25px 0;">MA</div>
<div class="t" style="left:0;width:50px;text-align:center;top:697.59px;font-size:12.3px;color:#c8c8c8;transform:scaleX(0.9);transform-origin:25px 0;">BU</div>
<div class="t" style="left:0;width:50px;text-align:center;top:739.59px;font-size:12.3px;color:#c8c8c8;transform:scaleX(0.9);transform-origin:25px 0;">PE</div>
<div class="t" style="left:0;width:50px;text-align:center;top:781.59px;font-size:12.3px;color:#c8c8c8;transform:scaleX(0.9);transform-origin:25px 0;">LO</div>
<div class="t" style="left:0;width:50px;text-align:center;top:823.59px;font-size:12.3px;color:#c8c8c8;transform:scaleX(0.9);transform-origin:25px 0;">DO</div>
<div class="t" style="left:0;width:50px;text-align:center;top:865.59px;font-size:12.3px;color:#c8c8c8;transform:scaleX(0.9);transform-origin:25px 0;">PR</div>
<div class="t" style="left:112.47px;top:18.90px;font-size:15px;color:#9a9a9a;font-weight:normal;transform:scaleX(1.0216);">Lohnarten</div>
<div class="t" style="left:231.05px;top:18.90px;font-size:15px;color:#9a9a9a;font-weight:normal;transform:scaleX(0.9941);">Versicherung</div>
<div class="t" style="left:361.27px;top:18.90px;font-size:15px;color:#9a9a9a;font-weight:normal;transform:scaleX(1.0221);">Lohnprofile</div>
<div class="t" style="left:486.71px;top:18.90px;font-size:15px;color:#9a9a9a;font-weight:normal;transform:scaleX(0.9847);">Zahlungsbedingungen</div>
<div class="t" style="left:681.80px;top:18.90px;font-size:15px;color:#9a9a9a;font-weight:normal;">Mahnwesen</div>
<div class="t" style="left:812.60px;top:18.90px;font-size:15px;color:#9a9a9a;font-weight:normal;transform:scaleX(0.9964);">Zahlungsmethoden</div>
<div class="t" style="left:989.49px;top:18.90px;font-size:15px;color:#9a9a9a;font-weight:normal;transform:scaleX(0.9354);">ESR/SEPA/Empfangsschein Text</div>
<div class="t" style="left:1244.08px;top:18.90px;font-size:15px;color:#9a9a9a;font-weight:normal;transform:scaleX(1.0155);">Buchhaltung</div>
<div class="t" style="left:1377.95px;top:18.90px;font-size:15px;color:#333;font-weight:normal;transform:scaleX(0.9593);">Steuers&auml;tze</div>
<svg style="left:90px;top:20px" width="14" height="14" viewBox="0 0 14 14"><path d="M1.3 5.6L3.6 10.6L6.1 3.4L9.6 10.8" fill="none" stroke="#9a9a9a" stroke-width="2.7" stroke-linejoin="round" stroke-linecap="round"/><path d="M9.4 0.3h4c0.6 3.5 0.6 9.6 0 13.4h-3.9c0.5-3.6 0.5-9.8-0.1-13.4z" fill="#9a9a9a"/></svg>
<svg style="left:1356px;top:20px" width="14" height="14" viewBox="0 0 14 14"><path d="M1.3 5.6L3.6 10.6L6.1 3.4L9.6 10.8" fill="none" stroke="#333" stroke-width="2.7" stroke-linejoin="round" stroke-linecap="round"/><path d="M9.4 0.3h4c0.6 3.5 0.6 9.6 0 13.4h-3.9c0.5-3.6 0.5-9.8-0.1-13.4z" fill="#333"/></svg>
<svg style="left:208.7px;top:19.9px" width="14" height="14" viewBox="0 0 14 14"><circle cx="6.7" cy="6.85" r="4.75" fill="none" stroke="#9a9a9a" stroke-width="3.9"/><circle cx="6.7" cy="6.85" r="4.75" fill="none" stroke="#f8f8f8" stroke-width="1.5" stroke-dasharray="3.6 3.86" stroke-dashoffset="1.8"/></svg>
<svg style="left:345px;top:20px" width="8" height="14" viewBox="0 0 8 14"><circle cx="4" cy="1.6" r="1.6" fill="#9a9a9a"/><path d="M0.9 4h6.2c0.5 0 0.9 0.4 0.9 0.9v4.3h-1.2v-3.6h-0.5v8.4h-1.8v-4.6h-1v4.6h-1.8v-8.4h-0.5v3.6h-1.2v-4.3c0-0.5 0.4-0.9 0.9-0.9z" fill="#9a9a9a"/></svg>
<svg style="left:465px;top:20px" width="13" height="14" viewBox="0 0 13 14"><rect x="0.6" y="2.4" width="11.8" height="11" rx="0.6" fill="none" stroke="#9a9a9a" stroke-width="1.2"/><rect x="0.6" y="2.4" width="11.8" height="2.5" fill="#9a9a9a"/><rect x="2.4" y="0.2" width="2.2" height="3.8" rx="0.6" fill="#9a9a9a"/><rect x="8.3" y="0.2" width="2.2" height="3.8" rx="0.6" fill="#9a9a9a"/><rect x="3" y="0.8" width="1" height="2.6" fill="#f8f8f8"/><rect x="8.9" y="0.8" width="1" height="2.6" fill="#f8f8f8"/></svg>
<svg style="left:660px;top:21px" width="14" height="11" viewBox="0 0 14 11"><rect x="0" y="0.0" width="14" height="3" fill="#9a9a9a"/><rect x="1.2" y="1.05" width="7.6" height="0.9" fill="#f8f8f8"/><rect x="10.9" y="1.05" width="1.6" height="0.9" fill="#f8f8f8"/><rect x="0" y="4.1" width="14" height="3" fill="#9a9a9a"/><rect x="1.2" y="5.15" width="7.6" height="0.9" fill="#f8f8f8"/><rect x="10.9" y="5.15" width="1.6" height="0.9" fill="#f8f8f8"/><rect x="0" y="8.2" width="14" height="3" fill="#9a9a9a"/><rect x="1.2" y="9.25" width="7.6" height="0.9" fill="#f8f8f8"/><rect x="10.9" y="9.25" width="1.6" height="0.9" fill="#f8f8f8"/></svg>
<svg style="left:789.5px;top:21px" width="14" height="11" viewBox="0 0 14 11"><rect x="0" y="0.0" width="14" height="3" fill="#9a9a9a"/><rect x="1.2" y="1.05" width="7.6" height="0.9" fill="#f8f8f8"/><rect x="10.9" y="1.05" width="1.6" height="0.9" fill="#f8f8f8"/><rect x="0" y="4.1" width="14" height="3" fill="#9a9a9a"/><rect x="1.2" y="5.15" width="7.6" height="0.9" fill="#f8f8f8"/><rect x="10.9" y="5.15" width="1.6" height="0.9" fill="#f8f8f8"/><rect x="0" y="8.2" width="14" height="3" fill="#9a9a9a"/><rect x="1.2" y="9.25" width="7.6" height="0.9" fill="#f8f8f8"/><rect x="10.9" y="9.25" width="1.6" height="0.9" fill="#f8f8f8"/></svg>
<svg style="left:967.5px;top:21px" width="14" height="11" viewBox="0 0 14 11"><rect x="0" y="0.0" width="14" height="3" fill="#9a9a9a"/><rect x="1.2" y="1.05" width="7.6" height="0.9" fill="#f8f8f8"/><rect x="10.9" y="1.05" width="1.6" height="0.9" fill="#f8f8f8"/><rect x="0" y="4.1" width="14" height="3" fill="#9a9a9a"/><rect x="1.2" y="5.15" width="7.6" height="0.9" fill="#f8f8f8"/><rect x="10.9" y="5.15" width="1.6" height="0.9" fill="#f8f8f8"/><rect x="0" y="8.2" width="14" height="3" fill="#9a9a9a"/><rect x="1.2" y="9.25" width="7.6" height="0.9" fill="#f8f8f8"/><rect x="10.9" y="9.25" width="1.6" height="0.9" fill="#f8f8f8"/></svg>
<svg style="left:1223px;top:20.8px" width="14" height="12" viewBox="0 0 14 12"><path d="M3.3 0.2h9.2l-2.7 9.2h-9.2z" fill="#9a9a9a"/><path d="M4.6 2h5.8 M4.1 3.9h5.8" stroke="#f8f8f8" stroke-width="1"/><path d="M0.6 9.8c-0.6 1.3 0 1.9 1 1.9h8.6l2.9-9.2" fill="none" stroke="#9a9a9a" stroke-width="1"/></svg>
<div class="a" style="left:1342px;top:50px;width:127px;height:3px;background:#3a6fd6;"></div>
<div class="a" style="left:1337px;top:5px;width:142px;height:54px;box-sizing:border-box;border:3px solid #ee0010;"></div>
<div class="a" style="left:1506px;top:11px;width:240px;height:30px;background:#2c3040;"></div>
<div class="t" style="left:1532.52px;top:19.06px;font-size:13.4px;color:#fff;font-weight:bold;transform:scaleX(0.9171);">Schweizer Standardwerte erstellen</div>
<svg style="left:1517px;top:18px" width="12" height="12" viewBox="0 0 12 12"><path d="M4.2 0.3h3.6v4.2h2.4l-4.2 4.2l-4.2-4.2h2.4z" fill="#fff"/><path d="M0.3 8.4h3.6l2.1 1.7l2.1-1.7h3.6v3.3h-11.4z" fill="#fff"/></svg>
<div class="a" style="left:1759px;top:11px;width:98px;height:30px;background:#2c3040;"></div>
<svg style="left:1770.2px;top:21.3px" width="10" height="9" viewBox="0 0 10 9"><path d="M3.7 0h2.6v3.2h3.7v2.6h-3.7v3.2h-2.6v-3.2h-3.7v-2.6h3.7z" fill="#fff"/></svg>
<div class="t" style="left:1784.12px;top:19.06px;font-size:13.4px;color:#fff;font-weight:bold;transform:scaleX(0.9145);">Steuersatz</div>
</body></html>
